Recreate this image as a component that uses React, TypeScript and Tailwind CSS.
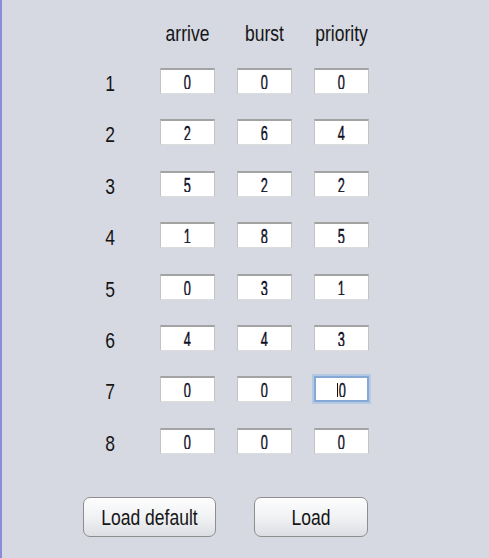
import React from 'react';

type Row = [number, number, number];

const rows: Row[] = [
  [0, 0, 0],
  [2, 6, 4],
  [5, 2, 2],
  [1, 8, 5],
  [0, 3, 1],
  [4, 4, 3],
  [0, 0, 0],
  [0, 0, 0],
];

const headers = ['arrive', 'burst', 'priority'];

function Cell({ value, focused }: { value: number; focused?: boolean }) {
  return (
    <div
      className={
        focused
          ? 'w-[55px] h-[26px] bg-white border-2 border-[#86a8d4] outline-2 outline-[#b4c9e4]'
          : 'w-[55px] h-[26px] bg-white border border-t-2 border-t-[#a3a3a3] border-x-[#c3c3c3] border-b-[#dcdcdc]'
      }
    >
      <div className="h-[19px] overflow-hidden flex justify-center">
        <span className="flex items-start pt-[3px]">
          {focused && <span className="w-[1.5px] h-[16px] bg-[#111] mt-[2px]" />}
          <span className="inline-block text-[15px] leading-[14px] text-[#0d0d25] origin-top scale-x-[0.85] scale-y-[1.45] [-webkit-text-stroke:0.3px_#0d0d25]">
            {value}
          </span>
        </span>
      </div>
    </div>
  );
}

export default function App() {
  return (
    <div className="h-[558px] bg-[#d6d9e1] border-l-2 border-[#8b8bd9] font-['Liberation_Sans',Arial,sans-serif] text-[#151515]">
      <div className="pl-[88px] pt-[20px]">
        <div className="flex items-center h-[26px]">
          <div className="w-[40px] mr-[30px]" />
          <div className="flex gap-[22px]">
            {headers.map((h) => (
              <div key={h} className="w-[55px] text-center text-[17.5px] leading-[26px] scale-y-[1.3]">
                {h}
              </div>
            ))}
          </div>
        </div>

        <div className="flex flex-col gap-[25.4px] mt-[22px]">
          {rows.map((r, i) => (
            <div key={i} className="flex items-center h-[26px]">
              <div className="w-[40px] mr-[30px] text-center text-[17.5px] leading-[26px] translate-y-[2px] scale-y-[1.25]">
                {i + 1}
              </div>
              <div className="flex gap-[22px]">
                {r.map((v, j) => (
                  <Cell key={j} value={v} focused={i === 6 && j === 2} />
                ))}
              </div>
            </div>
          ))}
        </div>
      </div>

      <div className="flex gap-[38px] ml-[81px] mt-[43px]">
        <button
          type="button"
          className="w-[133px] h-[40px] rounded-[7px] border border-[#8e8e8e] bg-gradient-to-b from-[#fdfdfd] via-[#f1f2f4] to-[#dcdee3] shadow-[inset_0_1px_0_#fff] text-[17.5px] text-[#151515]"
        >
          <span className="inline-block scale-y-[1.25] translate-y-[1px]">Load default</span>
        </button>
        <button
          type="button"
          className="w-[114px] h-[40px] rounded-[7px] border border-[#8e8e8e] bg-gradient-to-b from-[#fdfdfd] via-[#f1f2f4] to-[#dcdee3] shadow-[inset_0_1px_0_#fff] text-[17.5px] text-[#151515]"
        >
          <span className="inline-block scale-y-[1.25] translate-y-[1px]">Load</span>
        </button>
      </div>
    </div>
  );
}
